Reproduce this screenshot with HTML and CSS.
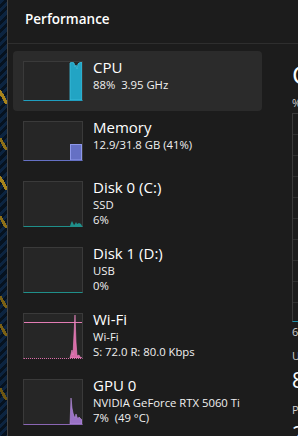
FILE: index.html
```html
<!DOCTYPE html>
<html lang="en">
<head>
    <meta charset="UTF-8">
    <title>Task Manager - Performance</title>
    <link rel="stylesheet" href="styles.css">
</head>
<body>
    <div class="wallpaper"></div>
    <div class="window">
        <header class="title-bar">Performance</header>

        <div class="content">
            <ul class="devices">
                <li class="device selected">
                    <div class="thumb cpu">
                        <svg viewBox="0 0 58 38" preserveAspectRatio="none">
                            <polygon points="46,38 46,1 48,0 50,1 51,5 52,3 53,7 54,2 55,1 58,0 58,38" fill="#22a4c4" stroke="#3cc0e0" stroke-width="0.8"/>
                        </svg>
                    </div>
                    <div class="info">
                        <div class="name">CPU</div>
                        <div class="detail">88%&nbsp; 3.95 GHz</div>
                    </div>
                </li>
                <li class="device">
                    <div class="thumb memory">
                        <svg viewBox="0 0 58 38" preserveAspectRatio="none">
                            <rect x="46.5" y="22.5" width="11" height="15.5" fill="#6570c4" stroke="#8e98ea" stroke-width="1"/>
                        </svg>
                    </div>
                    <div class="info">
                        <div class="name">Memory</div>
                        <div class="detail">12.9/31.8 GB (41%)</div>
                    </div>
                </li>
                <li class="device tall">
                    <div class="thumb disk">
                        <svg viewBox="0 0 58 44" preserveAspectRatio="none">
                            <polygon points="46,44 47,41 48,39 49,41 50,43 51,42 52,40 53,42 55,41 57,42 58,44" fill="#1f8f8a"/>
                        </svg>
                    </div>
                    <div class="info">
                        <div class="name">Disk 0 (C:)</div>
                        <div class="detail">SSD</div>
                        <div class="detail">6%</div>
                    </div>
                </li>
                <li class="device tall">
                    <div class="thumb disk">
                        <svg viewBox="0 0 58 44" preserveAspectRatio="none"></svg>
                    </div>
                    <div class="info">
                        <div class="name">Disk 1 (D:)</div>
                        <div class="detail">USB</div>
                        <div class="detail">0%</div>
                    </div>
                </li>
                <li class="device tall">
                    <div class="thumb wifi">
                        <svg viewBox="0 0 58 44" preserveAspectRatio="none">
                            <line x1="0" y1="8.5" x2="58" y2="8.5" stroke="#e27cb4" stroke-width="1"/>
                            <polygon points="46,44 47,40 48,36 49,41 50,20 51,1 52,28 53,42 55,41 56,43 58,44" fill="#d86aa6" stroke="#f08cc6" stroke-width="0.6"/>
                        </svg>
                    </div>
                    <div class="info">
                        <div class="name">Wi-Fi</div>
                        <div class="detail">Wi-Fi</div>
                        <div class="detail">S: 72.0 R: 80.0 Kbps</div>
                    </div>
                </li>
                <li class="device tall">
                    <div class="thumb gpu">
                        <svg viewBox="0 0 58 44" preserveAspectRatio="none">
                            <polygon points="46,44 47,18 48,28 49,33 50,36 51,38 52,34 53,37 54,39 55,37 56,38 58,40 58,44" fill="#9a72c6" stroke="#b890e0" stroke-width="0.6"/>
                        </svg>
                    </div>
                    <div class="info">
                        <div class="name">GPU 0</div>
                        <div class="detail">NVIDIA GeForce RTX 5060 Ti</div>
                        <div class="detail">7%&nbsp; (49 °C)</div>
                    </div>
                </li>
            </ul>

            <section class="panel">
                <h2 class="panel-title">CPU</h2>
                <div class="label">% Utilization over 60 seconds</div>
                <div class="chart">
                    <div class="grid"></div>
                </div>
                <div class="label">60 seconds</div>
                <div class="label stat-label">Utilization</div>
                <div class="stat-value">88%</div>
                <div class="label stat-label">Processes</div>
                <div class="stat-value">231</div>
            </section>
        </div>
    </div>
</body>
</html>
```

FILE: styles.css
```css
body {
    margin: 0;
    display: flex;
    height: 436px;
    overflow: hidden;
    background-color: #1c1c1c;
    font-family: "Open Sans", "Noto Sans", Arial, sans-serif;
    color: #ffffff;
}
.wallpaper {
    width: 7px;
    flex: none;
    background:
        linear-gradient(60deg, transparent 35%, #a8841c 35% 60%, transparent 60%) 0 90px / 7px 14px no-repeat,
        linear-gradient(60deg, transparent 35%, #8e7018 35% 60%, transparent 60%) 0 138px / 7px 12px no-repeat,
        linear-gradient(60deg, transparent 35%, #a8841c 35% 60%, transparent 60%) 0 176px / 7px 14px no-repeat,
        linear-gradient(60deg, transparent 35%, #8e7018 35% 60%, transparent 60%) 0 216px / 7px 12px no-repeat,
        linear-gradient(60deg, transparent 35%, #7a6014 35% 60%, transparent 60%) 0 296px / 7px 12px no-repeat,
        linear-gradient(60deg, transparent 35%, #7a6014 35% 60%, transparent 60%) 0 324px / 7px 12px no-repeat,
        linear-gradient(60deg, transparent 35%, #6e5612 35% 60%, transparent 60%) 0 388px / 7px 12px no-repeat,
        repeating-linear-gradient(135deg, #0c2440 0 3px, #06121f 3px 6px);
}
.window {
    flex: 1;
    min-width: 0;
    border-left: 1px solid #444444;
    background-color: #1c1c1c;
    overflow: hidden;
}
.title-bar {
    height: 34px;
    padding: 9px 0 0 17px;
    font-size: 13.5px;
    font-weight: 600;
    line-height: 20px;
    border-bottom: 1px solid #2e2e2e;
}
.content {
    display: flex;
    align-items: flex-start;
}
.devices {
    list-style: none;
    margin: 7px 0 0 5px;
    padding: 0;
    width: 249px;
    flex: none;
}
.device {
    display: flex;
    align-items: flex-start;
    gap: 10px;
    height: 40px;
    padding: 10px;
    border-radius: 4px;
}
.device.tall {
    height: 46px;
}
.device.selected {
    background-color: #2b2b2b;
}
.thumb {
    width: 58px;
    height: 38px;
    flex: none;
    background-color: #262626;
    border: 1px solid #3a3a3a;
}
.device.tall .thumb {
    height: 44px;
}
.thumb svg {
    display: block;
    width: 100%;
    height: 100%;
}
.thumb.cpu { border-bottom-color: #1f9fc0; }
.thumb.memory { border-bottom-color: #6570c4; }
.thumb.disk { border-bottom-color: #1f8f8a; }
.thumb.wifi { border-bottom: 1px dotted #d86aa6; }
.thumb.gpu { border-bottom-color: #8a66b4; }
.info {
    margin-top: -4px;
    white-space: nowrap;
}
.name {
    font-size: 15px;
    line-height: 20px;
}
.detail {
    font-size: 11.3px;
    line-height: 15px;
    color: #f0f0f0;
}
.panel {
    margin-left: 30px;
    padding-top: 14px;
    width: 400px;
    flex: none;
}
.panel-title {
    margin: 0;
    font-size: 26px;
    font-weight: 400;
    line-height: 32px;
}
.label {
    font-size: 11px;
    line-height: 14px;
    color: #d0d0d0;
    margin-top: 6px;
}
.chart {
    margin-top: 3px;
    height: 207px;
    border: 1px solid #3a3a3a;
    border-bottom-color: #1f8fa8;
    margin-bottom: 3px;
}
.grid {
    height: 100%;
    background: repeating-linear-gradient(to bottom, transparent 0 20px, #2f2f2f 20px 21px);
}
.chart + .label {
    margin-top: 0;
}
.stat-label {
    margin-top: 10px;
}
.stat-value {
    font-size: 21px;
    line-height: 26px;
    margin-top: 4px;
}
```
